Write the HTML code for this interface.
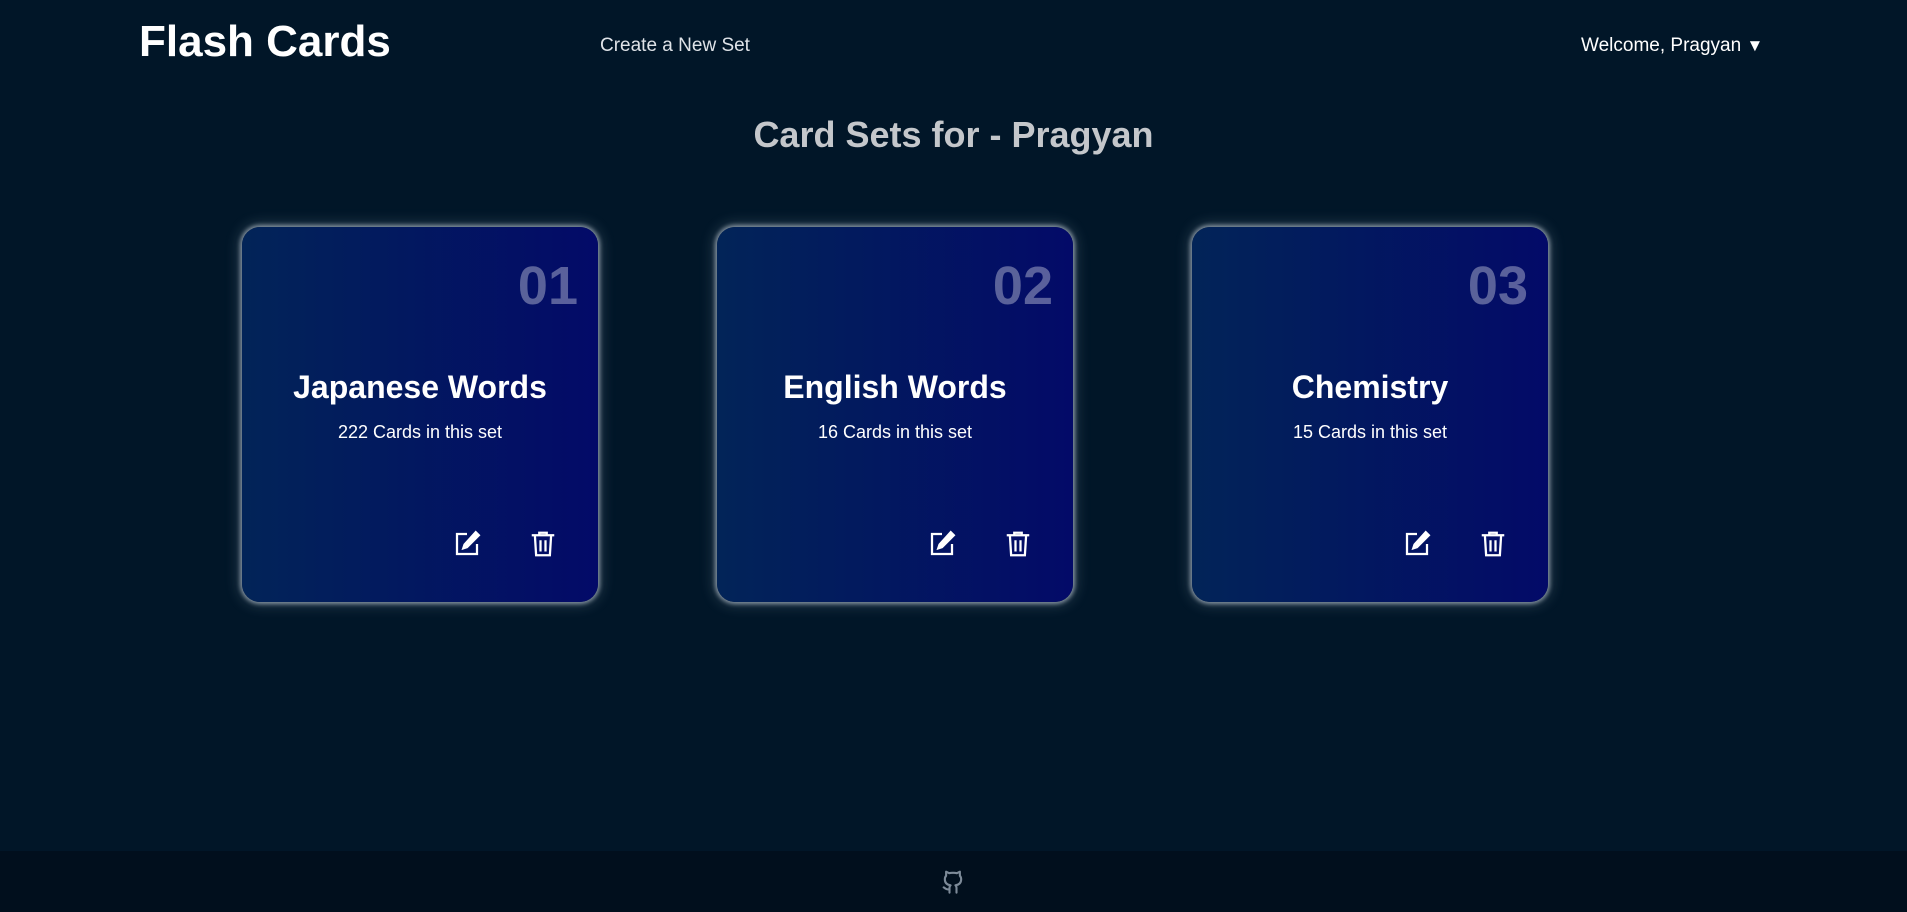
<!DOCTYPE html>
<html><head><meta charset="utf-8"><style>
*{margin:0;padding:0;box-sizing:border-box}
body{width:1907px;height:912px;background:#011628;font-family:"Liberation Sans",sans-serif;color:#fff;position:relative;overflow:hidden}
.t{position:absolute;white-space:nowrap}
.card{position:absolute;top:227px;width:356px;height:375px;border-radius:18px;background:linear-gradient(90deg,#022458,#030a68);box-shadow:0 0 4px 2px rgba(220,230,240,.55),0 0 14px 4px rgba(200,215,230,.18)}
.num{position:absolute;right:20px;top:28px;font-size:54px;font-weight:bold;color:rgba(255,255,255,.35)}
.ct{position:absolute;left:0;right:0;top:142px;text-align:center;font-size:32px;font-weight:bold}
.cs{position:absolute;left:0;right:0;top:195px;text-align:center;font-size:18px}
.ic{position:absolute;top:302px;width:30px;height:30px}
footer{position:absolute;left:0;top:851px;width:1907px;height:61px;background:#010f1d}
</style></head><body>
<div class="t" style="left:139px;top:17px;font-size:44px;font-weight:bold">Flash Cards</div>
<div class="t" style="left:600px;top:35px;font-size:19px;color:#dfe3e8">Create a New Set</div>
<div class="t" style="left:1581px;top:35px;font-size:19px">Welcome, Pragyan <span style="font-size:17px">▼</span></div>
<div class="t" style="left:0;width:1907px;text-align:center;top:114px;font-size:36px;font-weight:bold;color:#c4c7cb">Card Sets for - Pragyan</div>

<div class="card" style="left:242px"><div class="num">01</div><div class="ct">Japanese Words</div><div class="cs">222 Cards in this set</div>
<svg class="ic" style="left:210px" viewBox="0 0 24 24" fill="none" stroke="#fff" stroke-width="1.8"><path d="M12 4H4v16h16v-8"/><path d="M19 2.5l2.5 2.5L12 14.5 9 15.5l1-3z" fill="#fff"/></svg>
<svg class="ic" style="left:286px" viewBox="0 0 24 24" fill="none" stroke="#fff" stroke-width="1.8"><path d="M3 5h18M9 5V3h6v2M5.5 5l1 16h11l1-16M10 9v9M14 9v9"/></svg></div>

<div class="card" style="left:717px"><div class="num">02</div><div class="ct">English Words</div><div class="cs">16 Cards in this set</div>
<svg class="ic" style="left:210px" viewBox="0 0 24 24" fill="none" stroke="#fff" stroke-width="1.8"><path d="M12 4H4v16h16v-8"/><path d="M19 2.5l2.5 2.5L12 14.5 9 15.5l1-3z" fill="#fff"/></svg>
<svg class="ic" style="left:286px" viewBox="0 0 24 24" fill="none" stroke="#fff" stroke-width="1.8"><path d="M3 5h18M9 5V3h6v2M5.5 5l1 16h11l1-16M10 9v9M14 9v9"/></svg></div>

<div class="card" style="left:1192px"><div class="num">03</div><div class="ct">Chemistry</div><div class="cs">15 Cards in this set</div>
<svg class="ic" style="left:210px" viewBox="0 0 24 24" fill="none" stroke="#fff" stroke-width="1.8"><path d="M12 4H4v16h16v-8"/><path d="M19 2.5l2.5 2.5L12 14.5 9 15.5l1-3z" fill="#fff"/></svg>
<svg class="ic" style="left:286px" viewBox="0 0 24 24" fill="none" stroke="#fff" stroke-width="1.8"><path d="M3 5h18M9 5V3h6v2M5.5 5l1 16h11l1-16M10 9v9M14 9v9"/></svg></div>

<footer><svg style="position:absolute;left:939px;top:16px" width="28" height="28" viewBox="0 0 24 24" fill="none" stroke="#7d8a98" stroke-width="1.8" stroke-linecap="round" stroke-linejoin="round"><path d="M9 22v-4c0-1 .3-1.8.9-2.3C7 15.3 5 14 5 10.5c0-1.2.4-2.2 1.1-3V4l2.6 1.3A9 9 0 0 1 12 5a9 9 0 0 1 3.3.3L17.9 4v3.5c.7.8 1.1 1.8 1.1 3 0 3.5-2 4.8-4.9 5.2.6.5.9 1.3.9 2.3v4"/><path d="M9 19c-3 1-3.5-1-5-1.5"/></svg></footer>
</body></html>
